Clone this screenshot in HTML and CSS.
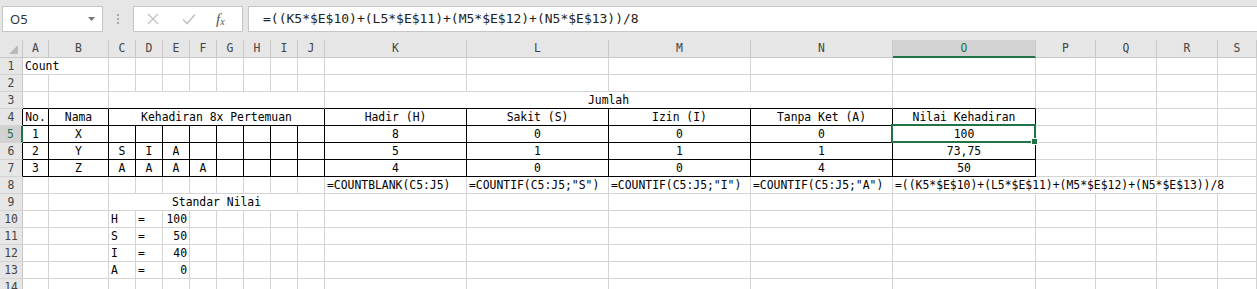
FILE: index.html
```html
<!DOCTYPE html>
<html lang="id">
<head>
    <meta charset="UTF-8">
    <title>Kehadiran</title>
    <link rel="stylesheet" href="styles.css">
</head>
<body>
    <div class="toolbar">
        <div class="namebox">
            <span>O5</span>
            <svg width="8" height="5" viewBox="0 0 8 5"><path d="M0 0h7L3.5 4z" fill="#777"/></svg>
        </div>
        <div class="grip">
            <i></i><i></i><i></i>
        </div>
        <div class="fxbox">
            <svg class="btn" width="12" height="12" viewBox="0 0 12 12"><path d="M1 1l10 10M11 1L1 11" stroke="#c2c2c2" stroke-width="1.4" fill="none"/></svg>
            <svg class="btn" width="14" height="12" viewBox="0 0 14 12"><path d="M1 6.5l4 4L13 1.5" stroke="#c2c2c2" stroke-width="1.6" fill="none"/></svg>
            <span class="fx"><i>f</i><sub>x</sub></span>
        </div>
        <div class="formula">=((K5*$E$10)+(L5*$E$11)+(M5*$E$12)+(N5*$E$13))/8</div>
    </div>
    <div id="sheet"></div>
    <script src="script.js"></script>
</body>
</html>
```

FILE: styles.css
```css
body {
    margin: 0;
    font-family: "DejaVu Sans Mono", monospace;
    background-color: #fff;
    overflow: hidden;
}

/* formula bar */
.toolbar {
    height: 40px;
    box-sizing: border-box;
    padding-top: 6px;
    background-color: #e6e6e6;
    display: flex;
    align-items: flex-start;
}
.namebox {
    margin-left: 2px;
    width: 101px;
    height: 26px;
    box-sizing: border-box;
    border: 1px solid #c6c6c6;
    background-color: #fff;
    display: flex;
    align-items: center;
    justify-content: space-between;
    padding: 0 6px 0 7px;
    font-family: "Noto Sans", sans-serif;
    font-size: 13px;
    color: #333;
}
.grip {
    width: 30px;
    height: 26px;
    display: flex;
    flex-direction: column;
    align-items: center;
    justify-content: center;
    gap: 2px;
}
.grip i {
    width: 2px;
    height: 2px;
    background-color: #a6a6a6;
}
.fxbox {
    width: 110px;
    height: 26px;
    box-sizing: border-box;
    border: 1px solid #c6c6c6;
    background-color: #fff;
    display: flex;
    align-items: center;
    padding-left: 13px;
    gap: 23px;
}
.fx {
    font-family: "Liberation Serif", serif;
    font-size: 15px;
    color: #555;
    margin-left: -3px;
}
.fx sub {
    font-size: 10px;
    font-style: italic;
    vertical-align: -1px;
}
.formula {
    flex: 1;
    margin-left: 5px;
    height: 26px;
    box-sizing: border-box;
    border: 1px solid #c6c6c6;
    border-right: none;
    background-color: #fff;
    padding-left: 14px;
    font-size: 13px;
    line-height: 24px;
    color: #222;
    white-space: nowrap;
}

/* sheet grid */
.row {
    display: grid;
    grid-template-columns: 23px 26px 60px repeat(8, 27px) repeat(4, 142px) 143px 60px 61px 61px 1fr;
    height: 17px;
}
.row.head {
    height: 18px;
}
.corner, .colhdr, .rowhdr {
    background-color: #e6e6e6;
    color: #444;
    font-size: 11.4px;
    text-align: center;
    border-right: 1px solid #c8c8c8;
    border-bottom: 1px solid #c8c8c8;
    line-height: 17px;
}
.rowhdr {
    line-height: 16px;
    border-bottom-color: #d4d4d4;
}
.corner {
    position: relative;
}
.corner::after {
    content: "";
    position: absolute;
    right: 4px;
    bottom: 3px;
    border-left: 9px solid transparent;
    border-bottom: 9px solid #b9b9b9;
}
.colhdr.sel {
    background-color: #d2d2d2;
    color: #217346;
    border-bottom: 2px solid #217346;
    line-height: 16px;
}
.rowhdr.sel {
    background-color: #d2d2d2;
    color: #217346;
    border-right: 2px solid #217346;
}
.rowhdr.edge {
    border-right-color: #000;
}
.c {
    border-right: 1px solid #d4d4d4;
    border-bottom: 1px solid #d4d4d4;
    font-size: 11.4px;
    line-height: 16px;
    padding: 0 2px;
    white-space: nowrap;
    color: #000;
    min-width: 0;
}
.c.ctr {
    text-align: center;
}
.c.rt {
    text-align: right;
}
.c.bk {
    border-right-color: #000;
    border-bottom-color: #000;
}
.c.bb {
    border-bottom-color: #000;
}
.c.active {
    position: relative;
}
.c.active::after {
    content: "";
    position: absolute;
    left: -2px;
    top: -2px;
    right: -1px;
    bottom: -1px;
    border: 2px solid #217346;
}
.c.active::before {
    content: "";
    position: absolute;
    right: -3px;
    bottom: -3px;
    width: 5px;
    height: 5px;
    background-color: #217346;
    border: 1px solid #fff;
    z-index: 1;
}
```

FILE: script.js
```js
var letters = 'ABCDEFGHIJKLMNOPQRS'.split('');

// [kolom, span, teks, perataan]
var data = {
    1: [[0, 2, 'Count']],
    3: [[2, 8, ''], [10, 4, 'Jumlah', 'ctr']],
    4: [[0, 1, 'No.', 'ctr'], [1, 1, 'Nama', 'ctr'], [2, 8, 'Kehadiran 8x Pertemuan', 'ctr'],
        [10, 1, 'Hadir (H)', 'ctr'], [11, 1, 'Sakit (S)', 'ctr'], [12, 1, 'Izin (I)', 'ctr'],
        [13, 1, 'Tanpa Ket (A)', 'ctr'], [14, 1, 'Nilai Kehadiran', 'ctr']],
    5: [[0, 1, '1', 'ctr'], [1, 1, 'X', 'ctr'], [10, 1, '8', 'ctr'], [11, 1, '0', 'ctr'],
        [12, 1, '0', 'ctr'], [13, 1, '0', 'ctr'], [14, 1, '100', 'ctr']],
    6: [[0, 1, '2', 'ctr'], [1, 1, 'Y', 'ctr'], [2, 1, 'S', 'ctr'], [3, 1, 'I', 'ctr'], [4, 1, 'A', 'ctr'],
        [10, 1, '5', 'ctr'], [11, 1, '1', 'ctr'], [12, 1, '1', 'ctr'], [13, 1, '1', 'ctr'], [14, 1, '73,75', 'ctr']],
    7: [[0, 1, '3', 'ctr'], [1, 1, 'Z', 'ctr'], [2, 1, 'A', 'ctr'], [3, 1, 'A', 'ctr'], [4, 1, 'A', 'ctr'],
        [5, 1, 'A', 'ctr'], [10, 1, '4', 'ctr'], [11, 1, '0', 'ctr'], [12, 1, '0', 'ctr'], [13, 1, '4', 'ctr'],
        [14, 1, '50', 'ctr']],
    8: [[10, 1, '=COUNTBLANK(C5:J5)'], [11, 1, '=COUNTIF(C5:J5;"S")'], [12, 1, '=COUNTIF(C5:J5;"I")'],
        [13, 1, '=COUNTIF(C5:J5;"A")'], [14, 5, '=((K5*$E$10)+(L5*$E$11)+(M5*$E$12)+(N5*$E$13))/8']],
    9: [[2, 8, 'Standar Nilai', 'ctr']],
    10: [[2, 1, 'H'], [3, 1, '='], [4, 1, '100', 'rt']],
    11: [[2, 1, 'S'], [3, 1, '='], [4, 1, '50', 'rt']],
    12: [[2, 1, 'I'], [3, 1, '='], [4, 1, '40', 'rt']],
    13: [[2, 1, 'A'], [3, 1, '='], [4, 1, '0', 'rt']]
};

function el(cls, text) {
    var d = document.createElement('div');
    d.className = cls;
    d.textContent = text || '';
    return d;
}

var sheet = document.getElementById('sheet');

var head = el('row head');
head.appendChild(el('corner'));
letters.forEach(function (l) {
    head.appendChild(el(l === 'O' ? 'colhdr sel' : 'colhdr', l));
});
sheet.appendChild(head);

for (var r = 1; r <= 14; r++) {
    var row = el('row');
    var rh = 'rowhdr';
    if (r === 5) rh += ' sel';
    else if (r >= 4 && r <= 7) rh += ' edge';
    row.appendChild(el(rh, String(r)));

    var items = data[r] || [];
    var c = 0;
    while (c < letters.length) {
        var item = null;
        for (var k = 0; k < items.length; k++) {
            if (items[k][0] === c) item = items[k];
        }
        var span = item ? item[1] : 1;
        var cls = 'c';
        if (item && item[3]) cls += ' ' + item[3];
        if (r >= 4 && r <= 7 && c <= 14) cls += ' bk';
        if (r === 3 && c <= 14) cls += ' bb';
        if (r === 5 && c === 14) cls += ' active';
        var d = el(cls, item ? item[2] : '');
        if (span > 1) d.style.gridColumn = 'span ' + span;
        row.appendChild(d);
        c += span;
    }
    sheet.appendChild(row);
}
```
